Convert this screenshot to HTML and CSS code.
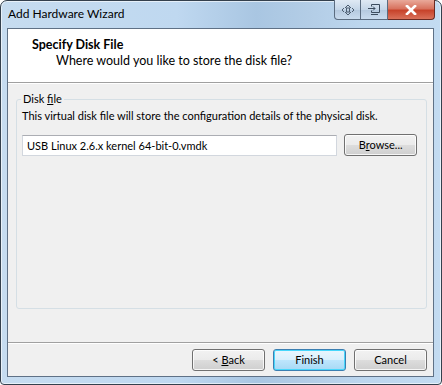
FILE: index.html
```html
<!DOCTYPE html>
<html>
<head>
<meta charset="utf-8">
<link rel="stylesheet" href="styles.css">
</head>
<body>
<div class="window">
  <div class="titlebar">
    <span class="title">Add Hardware Wizard</span>
    <div class="controls">
      <div class="ctl ctl-left"><svg width="14" height="12" viewBox="0 0 14 12"><path d="M7 1 L4 4 M7 1 L10 4 M7 11 L4 8 M7 11 L10 8 M1 6 L3 4 M1 6 L3 8 M13 6 L11 4 M13 6 L11 8" stroke="#4c5d70" fill="none" stroke-width="1"/><rect x="5.5" y="4" width="3" height="4" fill="none" stroke="#4c5d70"/></svg></div>
      <div class="ctl ctl-mid"><svg width="12" height="11" viewBox="0 0 12 11"><path d="M3.5 0.5 H11.5 V8.5 H3.5 V6.5 M3.5 2.5 V0.5" stroke="#3c4c5e" fill="none"/><path d="M0 4.5 H7 M5 2.5 L7 4.5 L5 6.5" stroke="#3c4c5e" fill="none"/><path d="M3 10.5 H10" stroke="#3c4c5e"/></svg></div>
      <div class="ctl ctl-close"><svg width="12" height="10" viewBox="0 0 12 10"><path d="M2 1 L10 9 M10 1 L2 9" stroke="#fff" stroke-width="2.6" stroke-linecap="square"/></svg></div>
    </div>
  </div>
  <div class="client">
    <div class="header">
      <div class="h-title">Specify Disk File</div>
      <div class="h-sub">Where would you like to store the disk file?</div>
    </div>
    <div class="body">
      <div class="group">
        <span class="legend">Disk <u>f</u>ile</span>
        <div class="desc">This virtual disk file will store the configuration details of the physical disk.</div>
        <div class="row">
          <div class="input">USB Linux 2.6.x kernel 64-bit-0.vmdk</div>
          <div class="btn browse">B<u>r</u>owse...</div>
        </div>
      </div>
    </div>
    <div class="footer">
      <div class="btn">&lt; <u>B</u>ack</div>
      <div class="btn default">Finish</div>
      <div class="btn">Cancel</div>
    </div>
  </div>
</div>
</body>
</html>
```
FILE: styles.css
```css
* { box-sizing: border-box; }
html, body { margin: 0; padding: 0; }
body {
  width: 442px; height: 385px; overflow: hidden;
  font-family: "Lato", "Open Sans", sans-serif;
  font-size: 11px; color: #000;
  background: #fff;
}
.window {
  width: 442px; height: 385px;
  border: 1px solid #34404d;
  border-radius: 7px 7px 4px 4px;
  background:
    linear-gradient(180deg, rgba(255,255,255,0) 0, rgba(255,255,255,0) 100%),
    linear-gradient(90deg, #c6dcf0 0%, #bfd8f0 40%, #a9c6e2 58%, #b3cde6 70%, #bcd6ee 82%, #c3dbf1 100%);
  display: flex; flex-direction: column;
  box-shadow: inset 0 0 0 1px rgba(255,255,255,0.6);
}
.titlebar {
  height: 27px; flex: none;
  display: flex; justify-content: space-between; align-items: flex-start;
  padding-left: 7px;
}
.title {
  font-size: 12px; line-height: 26px; color: #000;
}
.controls { display: flex; margin-right: 6px; margin-top: -1px; }
.ctl {
  height: 20px; display: flex; align-items: center; justify-content: center;
  border: 1px solid #5b6c80; border-top: none;
}
.ctl-left {
  width: 27px; border-radius: 0 0 0 4px;
  background: linear-gradient(#dfe9f4, #c5d6e8 50%, #b4c8de 51%, #c9dbee);
}
.ctl-mid {
  width: 27px; border-left: none;
  background: linear-gradient(#dfe9f4, #c5d6e8 50%, #b4c8de 51%, #c9dbee);
}
.ctl-close {
  width: 47px; border-left: none; border-radius: 0 0 4px 0;
  border-color: #6a2a22;
  background: linear-gradient(#e9a99a, #d8735f 45%, #c7432b 55%, #d9715a);
}
.client {
  flex: 1;
  margin: 0 7px 7px 6px;
  border: 1px solid #5f7186;
  background: #f0f0f0;
  display: flex; flex-direction: column;
}
.header {
  height: 54px; flex: none;
  background: #fff;
  border-bottom: 1px solid #a0a0a0;
  box-shadow: 0 1px 0 #fff;
  padding: 7px 0 0 24px;
  font-size: 12.5px;
}
.h-title { font-weight: bold; line-height: 17px; }
.h-sub { padding-left: 24px; line-height: 16px; }
.body { flex: 1; padding: 16px 6px 0 8px; }
.group {
  position: relative;
  border: 1px solid #d5dfe5;
  border-radius: 3px;
  height: 210px;
  padding: 8px 9px 0 5px;
}
.legend {
  position: absolute; top: -9px; left: 4px;
  background: #f0f0f0; padding: 0 2px;
  line-height: 16px;
}
.desc { line-height: 16px; margin-bottom: 10px; margin-top: 0; }
.row { display: flex; align-items: center; gap: 7px; }
.input {
  width: 317px; height: 21px;
  background: #fff;
  border: 1px solid #d2d7de; border-top-color: #abadb3;
  line-height: 19px; padding-left: 4px;
}
.btn {
  width: 73px; height: 22px;
  border: 1px solid #707070; border-radius: 3px;
  background: linear-gradient(#f2f2f2 0%, #ebebeb 48%, #dddddd 50%, #cfcfcf 100%);
  box-shadow: inset 0 0 0 1px rgba(255,255,255,0.8);
  text-align: center; line-height: 20px;
}
.browse { width: 73px; }
.footer {
  height: 34px; flex: none;
  border-top: 1px solid #a0a0a0;
  box-shadow: inset 0 1px 0 #fff;
  display: flex; justify-content: flex-end; align-items: center;
  gap: 8px; padding-right: 6px; padding-top: 1px;
}
.default {
  border-color: #3c7fb1;
  background: linear-gradient(#eaf6fd 0%, #d9f0fc 48%, #bee6fd 50%, #a7d9f5 100%);
  box-shadow: inset 0 0 0 1px #48d7fb;
}
```
